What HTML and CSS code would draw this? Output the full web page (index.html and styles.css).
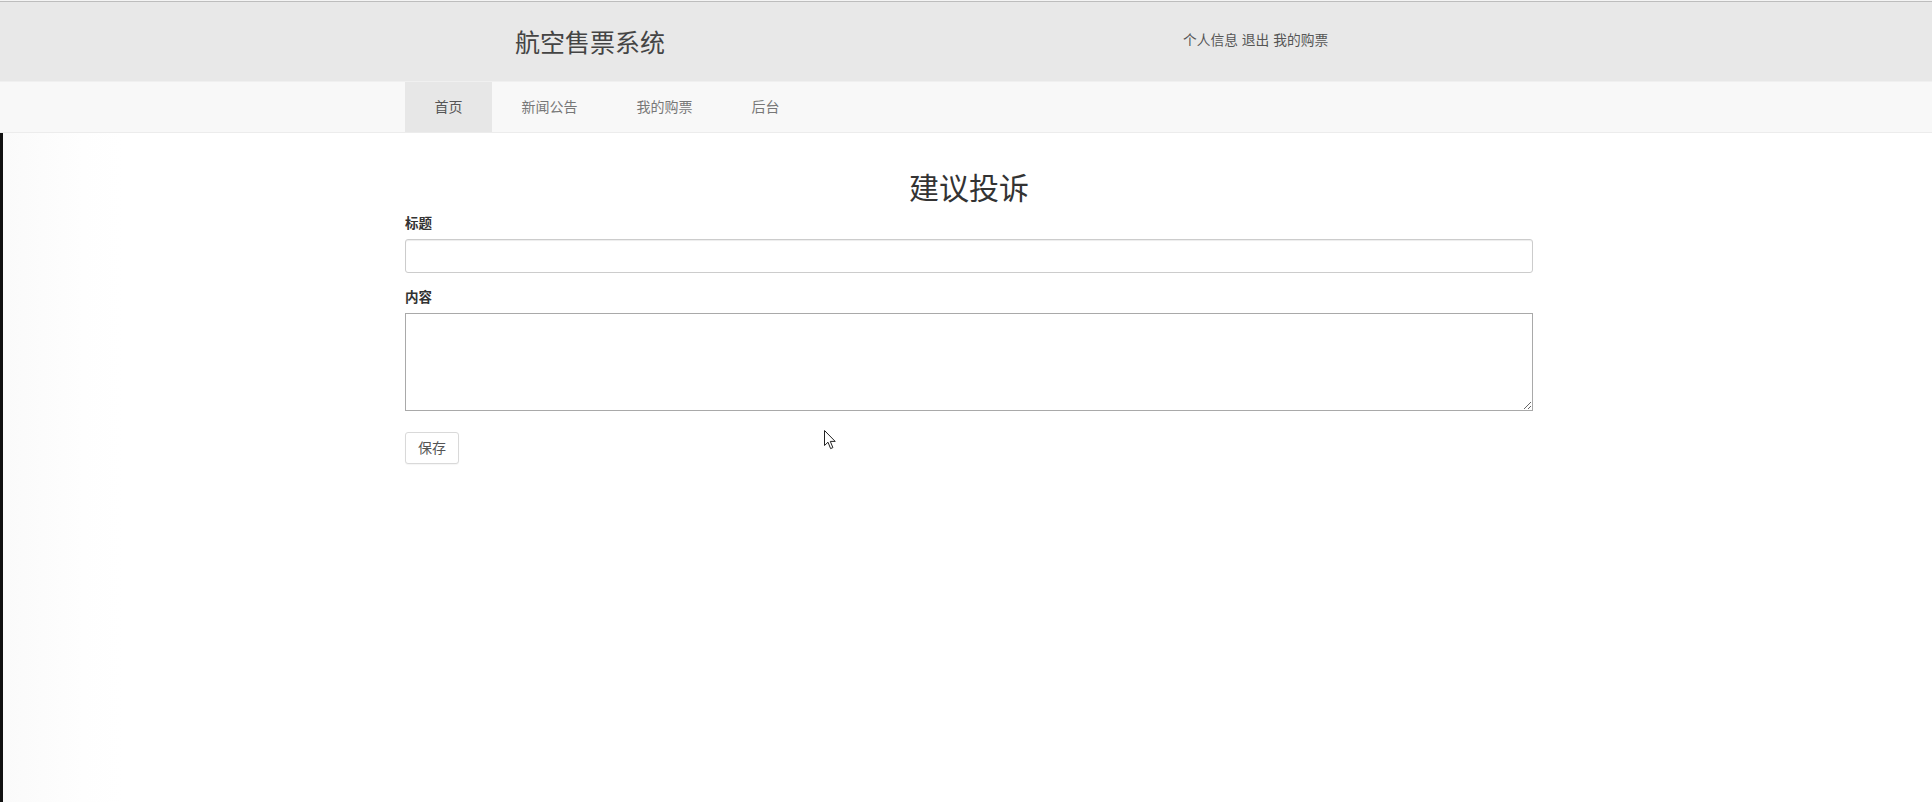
FILE: index.html
```html
<!DOCTYPE html>
<html lang="zh-CN">
<head>
<meta charset="utf-8">
<title>建议投诉 - 航空售票系统</title>
<link rel="stylesheet" href="styles.css">
</head>
<body>
<header class="topbar">
  <div class="container header-row">
    <div class="brand">航空售票系统</div>
    <div class="user-links"><a href="#">个人信息</a> <a href="#">退出</a> <a href="#">我的购票</a></div>
  </div>
</header>
<nav class="navbar">
  <div class="container">
    <ul class="nav">
      <li class="nav-item active"><a href="#">首页</a></li>
      <li class="nav-item"><a href="#">新闻公告</a></li>
      <li class="nav-item"><a href="#">我的购票</a></li>
      <li class="nav-item"><a href="#">后台</a></li>
    </ul>
  </div>
</nav>
<main class="page">
  <div class="container">
    <h2 class="page-title">建议投诉</h2>
    <form class="form">
      <div class="form-group">
        <label class="form-label" for="title">标题</label>
        <input class="form-input" id="title" type="text">
      </div>
      <div class="form-group">
        <label class="form-label" for="content">内容</label>
        <textarea class="form-textarea" id="content"></textarea>
      </div>
      <button class="btn" type="button">保存</button>
    </form>
  </div>
</main>
<svg class="cursor" width="13" height="20" viewBox="0 0 13 20" xmlns="http://www.w3.org/2000/svg">
  <path d="M0.5 0.5 L0.5 15.5 L4 12.2 L6.6 18.6 L8.9 17.6 L6.3 11.4 L11.2 11.4 Z" fill="#fff" stroke="#222" stroke-width="1" stroke-linejoin="round"/>
</svg>
</body>
</html>
```
FILE: styles.css
```css
* { box-sizing: border-box; }
html, body { margin: 0; padding: 0; }
body {
  font-family: "Liberation Sans", "Noto Sans CJK SC", sans-serif;
  font-size: 14px;
  line-height: 1.42857;
  color: #333;
  background: #fff;
  min-height: 802px;
  position: relative;
}
a { text-decoration: none; }

.container {
  width: 1128px;
  margin: 0 auto;
}

/* top header */
.topbar {
  height: 81px;
  padding-left: 6px;
  background: linear-gradient(#f4f4f4 0 1px, #bdbdbd 1px 2px, #e8e8e8 2px);
}
.header-row {
  height: 81px;
  display: grid;
  grid-template-columns: 778px auto;
  align-items: center;
  padding-top: 4px;
}
.brand {
  padding-left: 110px;
  font-size: 25px;
  line-height: 30px;
  color: #444;
}
.user-links {
  font-size: 13.75px;
  color: #555;
  line-height: 20px;
  padding-bottom: 3px;
}
.user-links a { color: #555; }

/* nav bar */
.navbar {
  padding-left: 6px;
  height: 52px;
  background: #f8f8f8;
  border-top: 1px solid #f0f0f0;
  border-bottom: 1px solid #ececec;
}
.nav {
  list-style: none;
  margin: 0;
  padding: 0;
  display: flex;
  height: 50px;
}
.nav-item a {
  display: block;
  height: 50px;
  line-height: 50px;
  padding: 0 29.5px;
  font-size: 14px;
  color: #777;
}
.nav-item.active a {
  background: #e7e7e7;
  color: #555;
}

/* page */
.page {
  border-left: 3px solid #111;
  padding-left: 3px;
  min-height: 669px;
  background: linear-gradient(90deg, #fafafa 0, #fefefe 80px, #fff 120px);
}
.page-title {
  margin: 0;
  padding-top: 39px;
  font-size: 30px;
  font-weight: 400;
  line-height: 33px;
  text-align: center;
  color: #333;
  margin-bottom: 9px;
}
.form-group { margin-bottom: 15px; }
.form-label {
  display: block;
  font-weight: 700;
  font-size: 13.5px;
  line-height: 20px;
  margin-bottom: 5px;
  color: #333;
}
.form-input {
  display: block;
  width: 100%;
  height: 34px;
  border: 1px solid #ccc;
  border-radius: 3px;
  box-shadow: inset 0 1px 1px rgba(0,0,0,.075);
  background: #fff;
  font: inherit;
  padding: 6px 12px;
}
.form-textarea {
  display: block;
  width: 100%;
  height: 98px;
  border: 1px solid #a9a9a9;
  border-radius: 0;
  background: #fff;
  font: inherit;
  padding: 2px;
  margin-bottom: 21px;
}
.form-group + .form-group { margin-bottom: 0; }
.btn {
  display: inline-block;
  height: 32px;
  padding: 0 12px;
  font-family: inherit;
  font-size: 14px;
  line-height: 30px;
  color: #555;
  background: #fff;
  border: 1px solid #d9d9d9;
  border-radius: 3px;
  box-shadow: 0 1px 1px rgba(0,0,0,.04);
}

.cursor {
  position: absolute;
  left: 824px;
  top: 430px;
}
```
